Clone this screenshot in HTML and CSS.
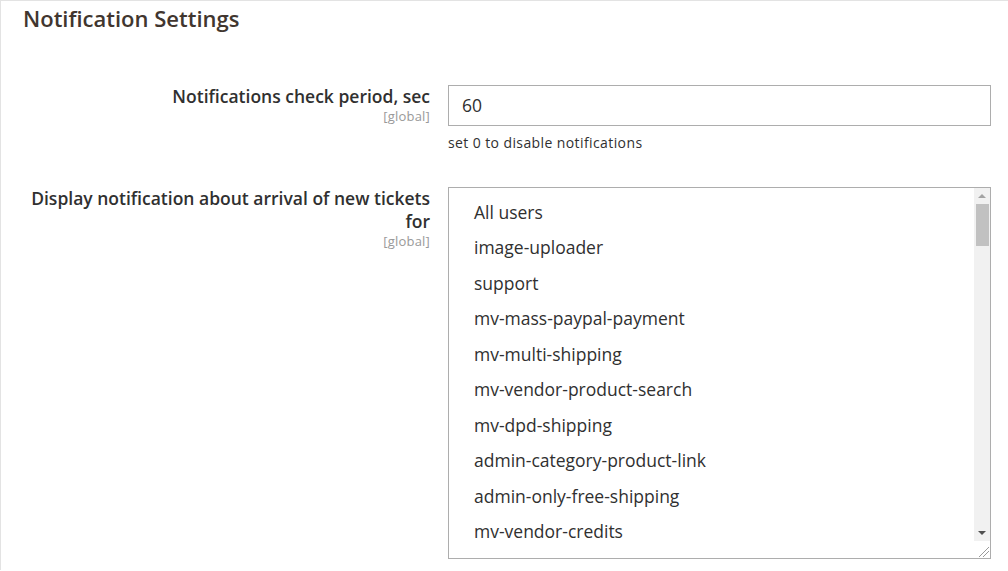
FILE: index.html
```html
<!DOCTYPE html>
<html lang="en">
<head>
<meta charset="utf-8">
<title>Notification Settings</title>
<link rel="stylesheet" href="styles.css">
</head>
<body>
<div class="page">
  <h2 class="title">Notification Settings</h2>
  <div class="form">
    <div class="row row-period">
      <div class="label">
        <span class="label-text">Notifications check period, sec</span>
        <span class="scope">[global]</span>
      </div>
      <div class="control">
        <div class="input">60</div>
        <div class="note">set 0 to disable notifications</div>
      </div>
    </div>
    <div class="row row-users">
      <div class="label">
        <span class="label-text">Display notification about arrival of new tickets for</span>
        <span class="scope">[global]</span>
      </div>
      <div class="control">
        <div class="multiselect">
          <ul class="options">
            <li>All users</li>
            <li>image-uploader</li>
            <li>support</li>
            <li>mv-mass-paypal-payment</li>
            <li>mv-multi-shipping</li>
            <li>mv-vendor-product-search</li>
            <li>mv-dpd-shipping</li>
            <li>admin-category-product-link</li>
            <li>admin-only-free-shipping</li>
            <li>mv-vendor-credits</li>
          </ul>
          <div class="scrollbar">
            <div class="sb-btn sb-up"><span class="arrow-up"></span></div>
            <div class="sb-track"><div class="sb-thumb"></div></div>
            <div class="sb-btn sb-down"><span class="arrow-down"></span></div>
          </div>
          <div class="resizer">
            <svg width="16" height="16" viewBox="0 0 16 16"><path d="M5 15 L15 5 M9 15 L15 9" stroke="#9a9a9a" stroke-width="1" fill="none"/></svg>
          </div>
        </div>
      </div>
    </div>
  </div>
</div>
</body>
</html>
```
FILE: styles.css
```css
html, body {
  margin: 0;
  padding: 0;
  background: #ffffff;
}
body {
  font-family: "Open Sans", "Liberation Sans", sans-serif;
  color: #303030;
  overflow: hidden;
}
.page {
  border-top: 1px solid #e3e3e3;
  border-left: 1px solid #e3e3e3;
  height: 570px;
  box-sizing: border-box;
}
.title {
  margin: 0;
  padding: 4px 0 0 22px;
  font-size: 22px;
  line-height: 26px;
  font-weight: 600;
  color: #41362f;
}
.form {
  display: flex;
  flex-direction: column;
  margin-top: 54px;
}
.row {
  display: grid;
  grid-template-columns: 429px 543px;
  column-gap: 18px;
}
.row-users {
  margin-top: 35px;
}
.label {
  display: flex;
  flex-direction: column;
  align-items: flex-end;
  text-align: right;
  padding-left: 30px;
}
.label-text {
  font-size: 17.5px;
  font-weight: 600;
  line-height: 23px;
  color: #303030;
}
.scope {
  font-size: 13px;
  letter-spacing: 0.2px;
  line-height: 16px;
  color: #999999;
}
.control {
  display: flex;
  flex-direction: column;
}
.input {
  box-sizing: border-box;
  height: 41px;
  border: 1px solid #adadad;
  padding: 0 13px;
  font-size: 17.5px;
  line-height: 39px;
  color: #303030;
}
.note {
  margin-top: 8px;
  font-size: 14px;
  letter-spacing: 0.4px;
  line-height: 18px;
  color: #303030;
}
.multiselect {
  position: relative;
  box-sizing: border-box;
  height: 372px;
  border: 1px solid #adadad;
  overflow: hidden;
}
.options {
  list-style: none;
  margin: 0;
  padding: 7px 0 0 25px;
}
.options li {
  font-size: 17.5px;
  line-height: 35.45px;
  color: #303030;
  white-space: nowrap;
}
.scrollbar {
  position: absolute;
  top: 0;
  right: 0;
  bottom: 17px;
  width: 16px;
  background: #f1f1f1;
  display: flex;
  flex-direction: column;
}
.sb-btn {
  height: 16px;
  display: flex;
  align-items: center;
  justify-content: center;
  flex: none;
}
.arrow-up {
  width: 0;
  height: 0;
  border-left: 4px solid transparent;
  border-right: 4px solid transparent;
  border-bottom: 4px solid #a3a3a3;
}
.arrow-down {
  width: 0;
  height: 0;
  border-left: 4px solid transparent;
  border-right: 4px solid transparent;
  border-top: 4px solid #505050;
}
.sb-track {
  flex: 1;
  padding: 0 1px 0 2px;
}
.sb-thumb {
  height: 42px;
  background: #c1c1c1;
}
.resizer {
  position: absolute;
  right: 0;
  bottom: 0;
  width: 16px;
  height: 17px;
  background: #ffffff;
  display: flex;
  align-items: flex-end;
  justify-content: flex-end;
}
.resizer svg {
  display: block;
}
```
